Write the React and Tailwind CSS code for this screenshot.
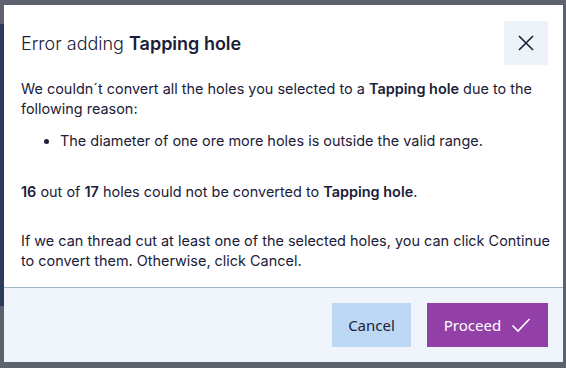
import React from "react";

export default function App() {
  return (
    <div className="w-[566px] h-[368px] bg-[#5e616e] relative overflow-hidden" style={{ fontFamily: "Inter, 'Noto Sans', sans-serif" }}>
      <div className="absolute left-0 top-[24px] w-[6px] h-[282px] bg-[#2e3a5b]" />
      <div className="absolute left-[4px] top-[5px] w-[559px] h-[357px] bg-white flex flex-col">
        <div className="flex items-start justify-between pl-[17px] pr-[15px] pt-[16px]">
          <h1 className="text-[18px] leading-[26px] text-[#1b2038] mt-[10px] font-light">
            Error adding <span className="font-semibold">Tapping hole</span>
          </h1>
          <button className="w-[44px] h-[44px] bg-[#eef3fa] flex items-center justify-center">
            <svg width="16" height="16" viewBox="0 0 16 16" fill="none" stroke="#1b2038" strokeWidth="1.6">
              <path d="M1 1 L15 15 M15 1 L1 15" />
            </svg>
          </button>
        </div>
        <div className="flex-1 pl-[17px] pr-[6px] pt-[14px] text-[14.45px] leading-[20px] text-[#1b2038]">
          <p>
            We couldn´t convert all the holes you selected to a <b className="font-semibold">Tapping hole</b> due to the following reason:
          </p>
          <ul className="list-disc pl-[39px] mt-[12px]">
            <li>The diameter of one ore more holes is outside the valid range.</li>
          </ul>
          <p className="mt-[31px]">
            <b className="font-semibold">16</b> out of <b className="font-semibold">17</b> holes could not be converted to <b className="font-semibold">Tapping hole</b>.
          </p>
          <p className="mt-[29px]">
            If we can thread cut at least one of the selected holes, you can click Continue to convert them. Otherwise, click Cancel.
          </p>
        </div>
        <div className="h-[75px] border-t border-[#9fb8c6] bg-[#f0f5fc] flex items-center justify-end gap-[16px] pr-[15px]" style={{ fontFamily: "'Noto Sans', sans-serif" }}>
          <button className="w-[79px] h-[44px] bg-[#bcd8f5] text-[#1b2038] text-[15px]">Cancel</button>
          <button className="w-[121px] h-[44px] bg-[#9240a8] text-white text-[15px] flex items-center justify-center gap-[10px]">
            Proceed
            <svg width="20" height="16" viewBox="0 0 20 16" fill="none" stroke="white" strokeWidth="1.6">
              <path d="M1.5 8.5 L7 14 L18.5 2" />
            </svg>
          </button>
        </div>
      </div>
    </div>
  );
}
